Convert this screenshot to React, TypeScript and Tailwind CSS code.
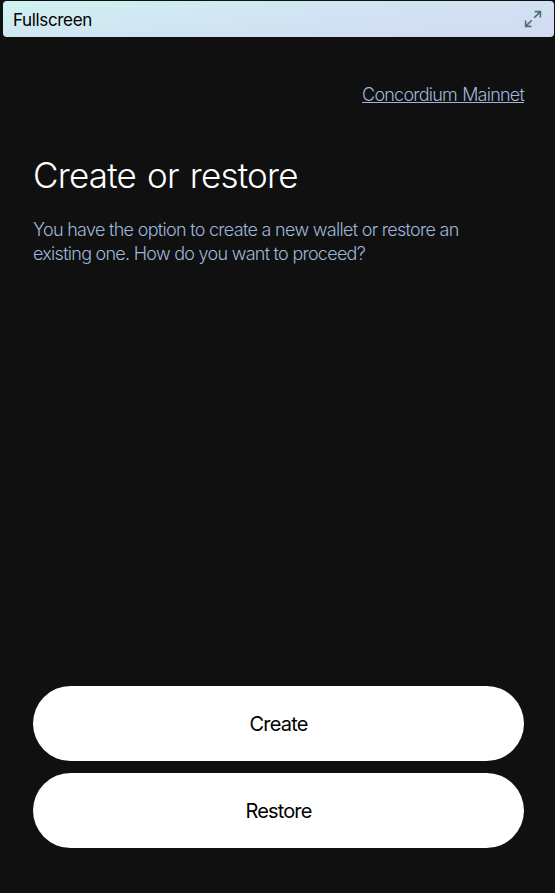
export default function App() {
  return (
    <div className="flex h-[893px] w-[555px] flex-col bg-[#101010] pt-px font-['Inter','Liberation_Sans',sans-serif]">
      <header className="ml-[3px] flex h-9 w-[551px] items-center justify-between rounded-[4px] bg-[linear-gradient(174deg,#cff3f1_0%,#d1e2f2_55%,#d2daf4_100%)] pr-3 pl-[10px]">
        <span className="pt-0.5 text-[17px] leading-6 tracking-[-0.35px] whitespace-nowrap text-black">Fullscreen</span>
        <svg width="18" height="18" viewBox="0 0 18 18" fill="none" stroke="#4c6e75" strokeWidth="1.6">
          <path d="M10.2 7.8 16.4 1.6M10.6 1.6h5.8v5.8M7.8 10.2l-6.2 6.2M1.6 10.6v5.8h5.8" />
        </svg>
      </header>
      <main className="flex flex-1 flex-col pr-[31px] pb-[45px] pl-[33px]">
        <a className="mt-[46px] self-end text-[18px] leading-6 font-light tracking-[-0.78px] [word-spacing:1px] whitespace-nowrap text-[#9eb6d9] underline decoration-1 underline-offset-1">
          Concordium Mainnet
        </a>
        <h1 className="mt-[44px] text-[35px] leading-[48px] font-[350] tracking-[-0.8px] [word-spacing:2px] whitespace-nowrap text-white">
          Create or restore
        </h1>
        <p className="mt-[19px] text-[18px] leading-6 font-light whitespace-nowrap text-[#9eb6d9]">
          <span className="tracking-[-0.7px]">You have the option to create a new wallet or restore an</span>
          <br />
          <span className="tracking-[-0.73px]">existing one. How do you want to proceed?</span>
        </p>
        <div className="mt-auto flex flex-col gap-3">
          <button className="h-[75px] rounded-full bg-white pt-px text-[20px] tracking-[-0.8px] text-black">Create</button>
          <button className="h-[75px] rounded-full bg-white pt-px text-[20px] tracking-[-0.85px] text-black">Restore</button>
        </div>
      </main>
    </div>
  );
}
